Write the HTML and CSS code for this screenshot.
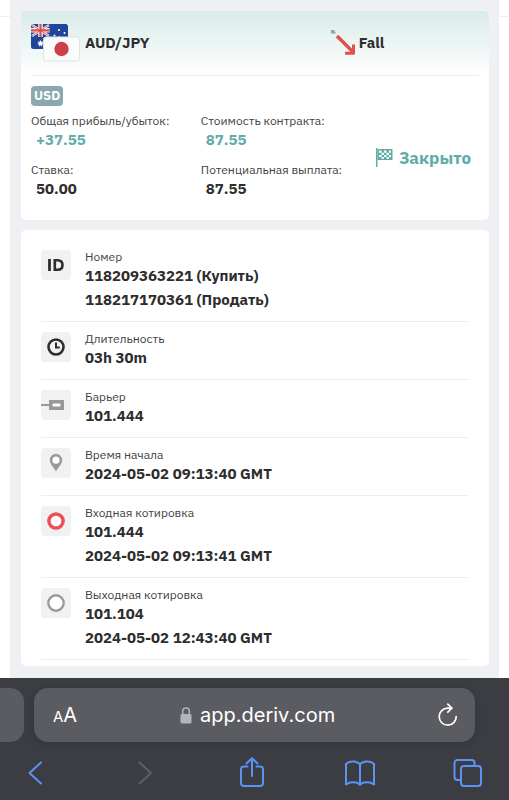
FILE: index.html
```html
<!DOCTYPE html>
<html lang="ru">

<head>
  <meta charset="UTF-8">
  <meta name="viewport" content="width=device-width, initial-scale=1.0">
  <title>AUD/JPY</title>
  <link rel="stylesheet" href="styles.css">
</head>

<body>
  <main class="page">
    <div class="modal">
      <section class="card summary">
        <header class="summary-head">
          <div class="symbol">
            <svg class="flags" width="50" height="38" viewBox="0 0 50 38">
              <rect x="0" y="0" width="37" height="25" rx="2.5" fill="#20469c"/>
              <path d="M1 1l17 11M18 1L1 12" stroke="#f3eef0" stroke-width="2.4"/>
              <path d="M9.500 0v13M0 6.300h18.500" stroke="#f3eef0" stroke-width="4.600"/>
              <path d="M1 1l17 11M18 1L1 12" stroke="#d8605f" stroke-width="0.900"/>
              <path d="M9.500 0v13M0 6.300h18.500" stroke="#d9514f" stroke-width="2.200"/>
              <path d="M9.500 16l.8 1.800 1.900-.6-.9 1.800 1.700 1-1.900.5.100 2-1.700-1.200-1.600 1.200.100-2-1.900-.5 1.700-1-.9-1.800 1.900.6z" fill="#fff"/>
              <g fill="#fff">
                <circle cx="28" cy="6" r="1"/>
                <circle cx="33.500" cy="9" r="1"/>
                <circle cx="23.500" cy="11.500" r="1"/>
                <circle cx="28.500" cy="12.500" r=".6"/>
              </g>
              <rect x="12.500" y="13" width="36" height="24" rx="2.500" fill="#fafbfb" stroke="#dfe3e3"/>
              <circle cx="30.500" cy="25" r="7.200" fill="#cf3f49"/>
            </svg>
            <span class="head-text">AUD/JPY</span>
          </div>
          <div class="trade-type">
            <svg width="25" height="26" viewBox="0 0 25 26">
              <path d="M1 0h3l2 3.500H1z" fill="#85a9ab"/>
              <path d="M7 6L23.500 22.500" fill="none" stroke="#df504f" stroke-width="3.400"/>
              <path d="M15 23.200h8.500V14.500" fill="none" stroke="#df504f" stroke-width="3" stroke-linejoin="round"/>
            </svg>
            <span class="head-text">Fall</span>
          </div>
        </header>

        <span class="currency">USD</span>

        <div class="summary-body">
          <dl class="figures">
            <div>
              <dt>Общая прибыль/убыток:</dt>
              <dd class="profit">+37.55</dd>
            </div>
            <div>
              <dt>Стоимость контракта:</dt>
              <dd class="profit">87.55</dd>
            </div>
            <div>
              <dt>Ставка:</dt>
              <dd>50.00</dd>
            </div>
            <div>
              <dt>Потенциальная выплата:</dt>
              <dd>87.55</dd>
            </div>
          </dl>
          <div class="status">
            <svg width="17" height="19" viewBox="0 0 17 19">
              <path d="M0 0h1.500v19H0z" fill="#61aca8"/>
              <path d="M1.500 1H16.500v11H1.500z" fill="#61aca8"/>
              <path d="M3 2.500h2.500v2.200H3zM8 2.500h2.500v2.200H8zM13 2.500h2v2.200h-2zM5.500 4.700H8v2.200H5.500zM10.500 4.700H13v2.200h-2.500zM3 6.900h2.500v2.200H3zM8 6.900h2.500v2.200H8zM13 6.900h2v2.200h-2zM5.500 9.100H8v1.700H5.500zM10.500 9.100H13v1.700h-2.500z" fill="#fff"/>
            </svg>
            <span>Закрыто</span>
          </div>
        </div>
      </section>

      <section class="card details">
        <div class="detail">
          <svg class="detail-icon" viewBox="0 0 30 30">
            <path d="M8.500 9v12" stroke="#2d2d2e" stroke-width="2.800"/>
            <path d="M13.800 10.200h2.700c3.200 0 5 1.900 5 4.800s-1.800 4.800-5 4.800h-2.700z" fill="none" stroke="#2d2d2e" stroke-width="2.600"/>
          </svg>
          <dl>
            <dt>Номер</dt>
            <dd>118209363221 (Купить)</dd>
            <dd>118217170361 (Продать)</dd>
          </dl>
        </div>
        <div class="detail">
          <svg class="detail-icon" viewBox="0 0 30 30">
            <circle cx="15" cy="15" r="7.500" fill="none" stroke="#2d2d2e" stroke-width="2.600"/>
            <path d="M15 10.500V15.500h3.800" fill="none" stroke="#2d2d2e" stroke-width="2"/>
          </svg>
          <dl>
            <dt>Длительность</dt>
            <dd>03h 30m</dd>
          </dl>
        </div>
        <div class="detail">
          <svg class="detail-icon" viewBox="0 0 30 30">
            <path d="M0 15h9" stroke="#999" stroke-width="2.200"/>
            <path d="M8 10h15v10H8z" fill="#999"/>
            <rect x="11.500" y="13.500" width="8" height="3" rx="1" fill="#fff"/>
          </svg>
          <dl>
            <dt>Барьер</dt>
            <dd>101.444</dd>
          </dl>
        </div>
        <div class="detail">
          <svg class="detail-icon" viewBox="0 0 30 30">
            <path d="M15 6c-3.600 0-6.200 2.700-6.200 6.100 0 4.100 4.200 7.600 6.200 11.400 2-3.800 6.200-7.300 6.200-11.400C21.200 8.700 18.600 6 15 6z" fill="#999"/>
            <circle cx="15" cy="12.200" r="3.600" fill="#fff"/>
          </svg>
          <dl>
            <dt>Время начала</dt>
            <dd>2024-05-02 09:13:40 GMT</dd>
          </dl>
        </div>
        <div class="detail">
          <svg class="detail-icon" viewBox="0 0 30 30">
            <circle cx="15" cy="15" r="7.100" fill="#fff" stroke="#eb5057" stroke-width="3.500"/>
          </svg>
          <dl>
            <dt>Входная котировка</dt>
            <dd>101.444</dd>
            <dd>2024-05-02 09:13:41 GMT</dd>
          </dl>
        </div>
        <div class="detail">
          <svg class="detail-icon" viewBox="0 0 30 30">
            <circle cx="15" cy="15" r="7.700" fill="#fff" stroke="#999" stroke-width="2.400"/>
          </svg>
          <dl>
            <dt>Выходная котировка</dt>
            <dd>101.104</dd>
            <dd>2024-05-02 12:43:40 GMT</dd>
          </dl>
        </div>
      </section>
    </div>
  </main>

  <footer class="browser">
    <div class="tabs">
      <div class="prev-tab"></div>
      <div class="address">
        <button class="text-size" type="button"><small>A</small>A</button>
        <button class="url" type="button">
          <svg width="12" height="17" viewBox="0 0 12 17">
            <path d="M2.700 8V4.300C2.700 2.200 4.100 1 6 1s3.300 1.200 3.300 3.300V8" fill="none" stroke="#b3b3bb" stroke-width="1.500"/>
            <rect x="0.500" y="7" width="11" height="9.500" rx="1.500" fill="#b3b3bb"/>
          </svg>
          <span>app.deriv.com</span>
        </button>
        <button class="reload" type="button" aria-label="Reload">
          <svg width="20" height="24" viewBox="0 0 20 24" fill="none" stroke="#fff" stroke-width="1.700" stroke-linecap="round" stroke-linejoin="round">
            <path d="M18.200 13.500A8.500 8.500 0 1 1 9.800 5.200h3.700"/>
            <path d="M9.800 1.200l4 4-4 4"/>
          </svg>
        </button>
      </div>
    </div>
    <nav class="toolbar">
      <button type="button" aria-label="Back">
        <svg width="32" height="32" viewBox="0 0 32 32">
          <path d="M21 5.500L9.500 16 21 26.500"/>
        </svg>
      </button>
      <button type="button" aria-label="Forward" disabled>
        <svg width="32" height="32" viewBox="0 0 32 32">
          <path d="M11.500 5.500L23 16 11.500 26.500"/>
        </svg>
      </button>
      <button type="button" aria-label="Share">
        <svg width="32" height="32" viewBox="0 0 32 32">
          <path d="M11.500 9.500H8A3 3 0 0 0 5 12.500V26a3 3 0 0 0 3 3h16a3 3 0 0 0 3-3V12.500a3 3 0 0 0-3-3h-3.500M16 19V1.500M10.500 6.500L16 1.200l5.500 5.300"/>
        </svg>
      </button>
      <button type="button" aria-label="Bookmarks">
        <svg width="32" height="32" viewBox="0 0 32 32">
          <path d="M16 7.500C13.500 4 5.500 3 2 7v20.500c3.500-3 11.500-3 14 .5 2.500-3.500 10.500-3.500 14-.5V7c-3.500-4-11.500-3-14 .5zM16 7.500V28"/>
        </svg>
      </button>
      <button type="button" aria-label="Tabs">
        <svg width="32" height="32" viewBox="0 0 32 32">
          <path d="M8.500 23H5.500a3 3 0 0 1-3-3V6a3 3 0 0 1 3-3h14a3 3 0 0 1 3 3v3"/>
          <rect x="9" y="9" width="20" height="20" rx="3"/>
        </svg>
      </button>
    </nav>
  </footer>
</body>

</html>
```
FILE: styles.css
```css
* {
  box-sizing: border-box;
}

body {
  display: flex;
  flex-direction: column;
  min-height: 100vh;
  margin: 0;
  background: #fff;
  color: #2d2d2e;
  font-family: "IBM Plex Sans", "Noto Sans", sans-serif;
}

dl, dd {
  margin: 0;
}

button {
  padding: 0;
  border: 0;
  background: none;
  color: inherit;
  font-family: inherit;
}

svg {
  display: block;
  flex: none;
}

/* page */
.page {
  display: flex;
  flex: 1;
  padding: 0 10px;
  background: linear-gradient(#eeeff0, #eeeff0) 0 16px / 100% 1px no-repeat;
}

.modal {
  flex: 1;
  padding: 11px 10px 11px 11px;
  background: #eff0f3;
}

.card {
  border-radius: 5px;
  background: #fff;
}

.card + .card {
  margin-top: 10px;
}

dt {
  font-size: 12px;
  line-height: 18px;
  color: #414142;
  white-space: nowrap;
}

dd {
  font-size: 15px;
  font-weight: bold;
  line-height: 20px;
}

/* summary */
.summary {
  padding: 0 10px 21px;
  background: linear-gradient(#d9ebe8, #fff 64px);
}

.summary-head {
  display: grid;
  grid-template-columns: 2fr 1fr;
  align-items: center;
  height: 65px;
  border-bottom: 1px solid #eceeef;
}

.symbol, .trade-type {
  display: flex;
  align-items: center;
  gap: 4px;
}

.head-text {
  font-size: 15px;
  font-weight: bold;
  line-height: 20px;
}

.currency {
  display: inline-block;
  margin-top: 10px;
  padding: 0 3px;
  border-radius: 4px;
  background: #8aa9ac;
  color: #fff;
  font-size: 13px;
  font-weight: bold;
  line-height: 20px;
  vertical-align: top;
}

.summary-body {
  display: grid;
  grid-template-columns: 7fr 3fr;
  margin-top: 6px;
}

.figures {
  display: grid;
  grid-template-columns: 13fr 11fr;
  row-gap: 11px;
}

.figures dd {
  padding-left: 5px;
}

.figures .profit {
  color: #61aca8;
}

.status {
  display: flex;
  align-items: center;
  justify-content: flex-end;
  gap: 6px;
  padding: 4px 8px 0 0;
  color: #61aca8;
  font-size: 17px;
  font-weight: bold;
  line-height: 24px;
}

/* details */
.details {
  padding: 10px 20px 6px;
}

.detail {
  display: flex;
  gap: 14px;
  padding: 8px 0 11px;
  border-bottom: 1px solid #eceeef;
}

.detail-icon {
  width: 30px;
  height: 30px;
  margin-top: 2px;
  border-radius: 4px;
  background: #f0f1f3;
}

.detail dd + dd {
  margin-top: 4px;
}

/* browser bars */
.browser {
  padding-top: 10px;
  background: #3c3d42;
  color: #fff;
  font-family: Inter, sans-serif;
}

.tabs {
  display: flex;
  gap: 10px;
  padding-right: 34px;
}

.prev-tab {
  width: 24px;
  border-radius: 0 14px 14px 0;
  background: #5b5c61;
}

.address {
  display: flex;
  flex: 1;
  align-items: center;
  justify-content: space-between;
  height: 54px;
  padding: 0 17px 0 19px;
  border-radius: 14px;
  background: #5b5c61;
  box-shadow: 0 2px 8px rgba(0, 0, 0, 0.12);
}

.text-size {
  font-size: 20px;
}

.text-size small {
  font-size: 15px;
}

.url {
  display: flex;
  align-items: center;
  gap: 8px;
  font-size: 20px;
}

.toolbar {
  display: flex;
  align-items: center;
  justify-content: space-between;
  height: 58px;
  padding: 3px 21px 0 16px;
}

.toolbar button {
  display: flex;
  justify-content: center;
  width: 40px;
}

.toolbar svg {
  fill: none;
  stroke: #5b92f5;
  stroke-width: 2;
  stroke-linecap: round;
  stroke-linejoin: round;
}

.toolbar button:disabled svg {
  stroke: #5e5f65;
}
```
